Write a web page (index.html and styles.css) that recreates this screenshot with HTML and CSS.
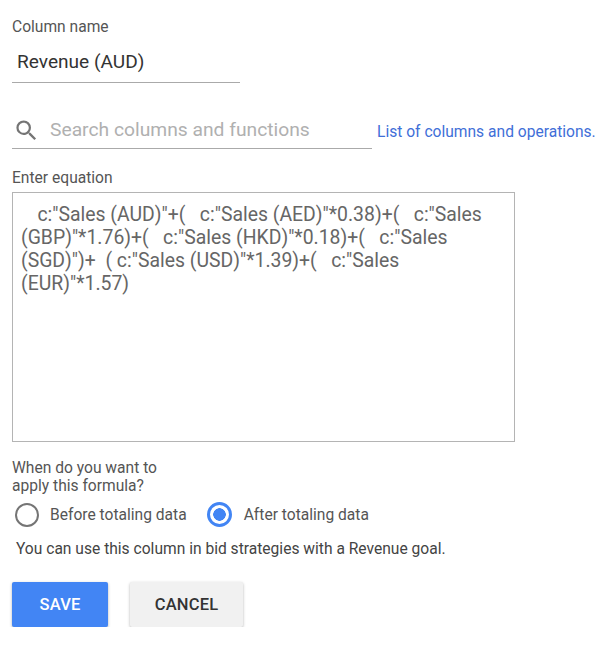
FILE: index.html
```html
<!DOCTYPE html>
<html lang="en">
<head>
  <meta charset="UTF-8">
  <title>Custom column</title>
  <link rel="stylesheet" href="styles.css">
</head>
<body>
  <div class="container">
    <label class="small-label name-label">Column name</label>
    <div class="name-field">Revenue (AUD)</div>

    <div class="search-row">
      <div class="search-field">
        <svg class="search-icon" width="27" height="27" viewBox="0 0 24 24">
          <path fill="#757575" d="M15.5 14h-.79l-.28-.27A6.47 6.47 0 0 0 16 9.5 6.5 6.5 0 1 0 9.5 16c1.61 0 3.09-.59 4.23-1.57l.27.28v.79l5 4.99L20.49 19l-4.99-5zm-6 0C7.01 14 5 11.99 5 9.5S7.01 5 9.5 5 14 7.01 14 9.5 11.99 14 9.5 14z"/>
        </svg>
        <span class="search-text">Search columns and functions</span>
      </div>
      <a href="#" class="list-link">List of columns and operations.</a>
    </div>

    <label class="small-label equation-label">Enter equation</label>
    <div class="equation-box">   c:"Sales (AUD)"+(   c:"Sales (AED)"*0.38)+(   c:"Sales (GBP)"*1.76)+(   c:"Sales (HKD)"*0.18)+(   c:"Sales (SGD)")+  ( c:"Sales (USD)"*1.39)+(   c:"Sales (EUR)"*1.57)</div>

    <p class="small-label when-label">When do you want to<br>apply this formula?</p>
    <div class="radio-row">
      <span class="radio"></span>
      <span class="radio-text">Before totaling data</span>
      <span class="radio radio-on"></span>
      <span class="radio-text">After totaling data</span>
    </div>
    <p class="note">You can use this column in bid strategies with a Revenue goal.</p>

    <div class="buttons">
      <button class="btn btn-save">SAVE</button>
      <button class="btn btn-cancel">CANCEL</button>
    </div>
  </div>
</body>
</html>
```

FILE: styles.css
```css
body {
  margin: 0;
  background: white;
  font-family: Roboto, "Liberation Sans", sans-serif;
  color: #444;
}
.container {
  padding: 19px 0 0 12px;
}
.small-label {
  display: block;
  margin: 0;
  font-size: 15.6px;
  line-height: 17px;
  color: #555;
}
.name-label {
  height: 17px;
}
.name-field {
  width: 223px;
  height: 46px;
  padding-left: 5px;
  border-bottom: 1px solid #aaa;
  font-size: 19.1px;
  line-height: 52px;
  color: #333;
}
.search-row {
  display: flex;
  align-items: flex-end;
  margin-top: 37px;
}
.search-field {
  display: flex;
  align-items: flex-start;
  width: 360px;
  height: 28px;
  border-bottom: 1px solid #aaa;
}
.search-icon {
  flex: none;
  margin-left: 1px;
  margin-top: -3px;
}
.search-text {
  margin-left: 10px;
  margin-top: -2px;
  font-size: 19.25px;
  color: #b0b0b0;
}
.list-link {
  margin-left: 5px;
  margin-bottom: 8px;
  font-size: 15.6px;
  color: #3f6fd8;
  text-decoration: none;
  white-space: nowrap;
}
.equation-label {
  margin-top: 21px;
}
.equation-box {
  box-sizing: border-box;
  width: 503px;
  height: 250px;
  margin-top: 5px;
  padding: 10px 19px 0 8px;
  border: 1px solid #b4b4b4;
  font-size: 19.4px;
  line-height: 23px;
  color: #666;
  white-space: pre-wrap;
  text-indent: 2px;
}
.when-label {
  margin-top: 17px;
  line-height: 18px;
}
.radio-row {
  display: flex;
  align-items: center;
  margin-top: 7px;
  margin-left: 3px;
  font-size: 15.6px;
  color: #555;
}
.radio {
  box-sizing: border-box;
  width: 24px;
  height: 24px;
  border: 2px solid #757575;
  border-radius: 50%;
}
.radio-on {
  width: 25px;
  height: 25px;
  border: 3px solid #4285f4;
  background: radial-gradient(circle, #4285f4 0, #4285f4 6px, white 6.5px);
}
.radio-text {
  margin-left: 11px;
  margin-right: 20px;
}
.radio-on + .radio-text {
  margin-left: 12px;
}
.note {
  margin: 13px 0 0 4px;
  font-size: 15.6px;
  line-height: 18px;
  color: #444;
}
.buttons {
  display: flex;
  gap: 22px;
  margin-top: 24px;
}
.btn {
  height: 45px;
  border: none;
  border-radius: 2px;
  font-family: Roboto, "Liberation Sans", sans-serif;
  font-size: 16.5px;
  font-weight: 500;
  letter-spacing: 0.2px;
  box-shadow: 0 1px 3px rgba(0, 0, 0, 0.3);
}
.btn-save {
  width: 96px;
  background: #4285f4;
  color: white;
}
.btn-cancel {
  width: 113px;
  background: #f1f1f1;
  color: #333;
}
```
